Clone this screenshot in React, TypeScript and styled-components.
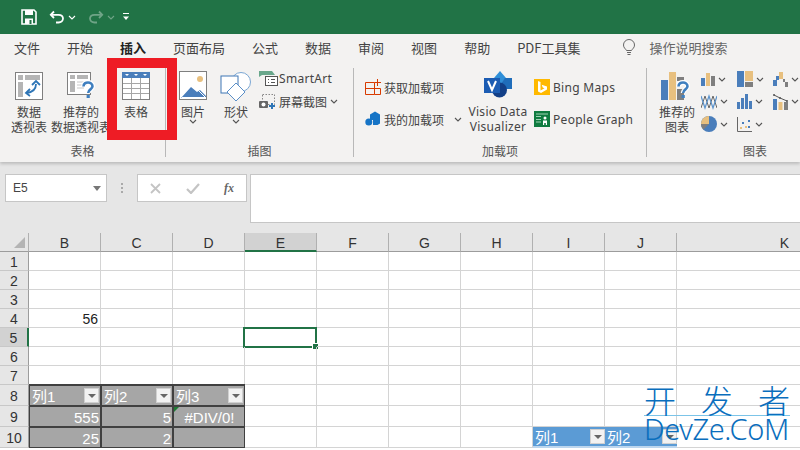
import { ReactNode } from "react";
import styled, { createGlobalStyle } from "styled-components";

const CJK = `"Noto Sans CJK SC", "Noto Sans", sans-serif`;
const LATIN = `"Liberation Sans", "Noto Sans CJK SC", sans-serif`;
const BLUE = "#4a7ebb";
const TAN = "#e8c07f";
const GREY = "#7f7f7f";

const GlobalStyle = createGlobalStyle`
    html, body { margin: 0; padding: 0; background: #e6e6e6; }
    #root { width: 800px; height: 450px; overflow: hidden; }
`;

const Page = styled.div`
    position: relative;
    width: 800px;
    height: 450px;
    overflow: hidden;
    display: flex;
    flex-direction: column;
    font-family: ${CJK};
    color: #444;
`;

const TitleBar = styled.div`
    height: 34px;
    background: #217346;
    display: flex;
    align-items: center;
    padding-left: 21px;
    gap: 6px;
`;

const QuickBtn = styled.span<{ $w: number; $dim?: boolean; $ml?: number }>`
    width: ${(p) => p.$w}px;
    margin-left: ${(p) => p.$ml || 0}px;
    display: flex;
    align-items: center;
    gap: 3px;
    opacity: ${(p) => (p.$dim ? 0.35 : 1)};
`;

const Ribbon = styled.div`
    height: 128px;
    background: #f3f2f1;
    box-shadow: 0 2px 3px rgba(0, 0, 0, 0.18);
    position: relative;
    z-index: 1;
`;

const TabRow = styled.div`
    height: 30px;
    box-sizing: border-box;
    padding: 0 0 3px 14px;
    display: flex;
    align-items: center;
    gap: 27px;
    font-size: 13px;
`;

const Tab = styled.span<{ $active?: boolean }>`
    color: ${(p) => (p.$active ? "#222" : "#444")};
    font-weight: ${(p) => (p.$active ? 700 : 400)};
    white-space: nowrap;
`;

const Search = styled.span`
    margin-left: 14px;
    display: flex;
    align-items: center;
    gap: 14px;
    color: #666;
`;

const Groups = styled.div`
    display: flex;
    padding-top: 4px;
`;

const Group = styled.div<{ $w: number; $last?: boolean }>`
    width: ${(p) => p.$w}px;
    flex: none;
    height: 89px;
    display: flex;
    flex-direction: column;
    border-right: ${(p) => (p.$last ? "none" : "1px solid #b8b8b8")};
    box-sizing: border-box;
`;

const GroupBody = styled.div`
    height: 77px;
    display: flex;
`;

const GroupLabel = styled.div`
    height: 12px;
    line-height: 12px;
    text-align: center;
    font-size: 12px;
    color: #555;
`;

const BigBtn = styled.div<{ $w: number; $ml?: number }>`
    width: ${(p) => p.$w}px;
    margin-left: ${(p) => p.$ml || 0}px;
    flex: none;
    display: flex;
    flex-direction: column;
    align-items: center;
    padding-top: 3px;
    font-size: 12px;
    line-height: 15px;
    white-space: nowrap;
`;

const BigIcon = styled.div`
    height: 29px;
    margin-bottom: 4px;
    display: flex;
    justify-content: center;
`;

const LatinLabel = styled.span`
    font-family: "Noto Sans", sans-serif;
    letter-spacing: 0.3px;
    font-size: 12px;
`;

const Stack = styled.div<{ $w: number; $pl: number; $gap: number; $pt: number }>`
    width: ${(p) => p.$w}px;
    flex: none;
    display: flex;
    flex-direction: column;
    padding: ${(p) => p.$pt}px 0 0 ${(p) => p.$pl}px;
    gap: ${(p) => p.$gap}px;
    box-sizing: border-box;
`;

const SmallBtn = styled.div<{ $gap?: number }>`
    height: 18px;
    display: flex;
    align-items: center;
    gap: ${(p) => p.$gap ?? 3}px;
    font-size: 12px;
    white-space: nowrap;
`;

const ChartGrid = styled.div`
    display: grid;
    grid-template-columns: repeat(3, 36px);
    grid-auto-rows: 22.5px;
    margin-left: 6px;
`;

const ChartBtn = styled.div`
    display: flex;
    align-items: center;
    gap: 3px;
    height: 22px;
`;

const RedBox = styled.div`
    position: absolute;
    left: 107px;
    top: 24px;
    width: 70px;
    height: 82px;
    box-sizing: border-box;
    border: 10px solid #ee1c25;
    z-index: 3;
`;

const FormulaArea = styled.div`
    height: 71px;
    background: #e6e6e6;
    display: flex;
    align-items: flex-start;
    padding: 12px 0 0 5px;
    box-sizing: border-box;
`;

const NameBox = styled.div`
    width: 102px;
    height: 28px;
    box-sizing: border-box;
    background: #fff;
    border: 1px solid #c6c6c6;
    display: flex;
    align-items: center;
    justify-content: space-between;
    padding: 0 5px 0 7px;
    font: 12px ${LATIN};
    color: #444;
`;

const Grip = styled.div`
    width: 2px;
    height: 10px;
    margin: 9px 14px 0 14px;
    border-left: 2px dotted #aaa;
    box-sizing: border-box;
`;

const FxBox = styled.div`
    width: 110px;
    height: 28px;
    box-sizing: border-box;
    background: #fff;
    border: 1px solid #c6c6c6;
    display: flex;
    align-items: center;
    justify-content: space-between;
    padding: 0 12px;
`;

const Fx = styled.span`
    font: italic 700 12px "Liberation Serif", serif;
    color: #666;
`;

const FormulaInput = styled.div`
    flex: 1;
    height: 49px;
    margin-left: 3px;
    background: #fff;
    border: 1px solid #c6c6c6;
    border-right: none;
    box-sizing: border-box;
`;

const Sheet = styled.div`
    flex: 1;
    background: #fff;
    overflow: hidden;
    font-family: ${LATIN};
    font-size: 14px;
    color: #222;
`;

const Row = styled.div<{ $h: number }>`
    display: flex;
    height: ${(p) => p.$h}px;
`;

const Corner = styled.div`
    width: 29px;
    flex: none;
    background: #e6e6e6;
    box-sizing: border-box;
    border-right: 1px solid #b0b0b0;
    border-bottom: 1px solid #9c9c9c;
    display: flex;
    align-items: flex-end;
    justify-content: flex-end;
    padding: 0 3px 3px 0;
`;

const ColHead = styled.div<{ $w: number; $on?: boolean }>`
    width: ${(p) => p.$w}px;
    flex: none;
    box-sizing: border-box;
    background: ${(p) => (p.$on ? "#d2d2d2" : "#e6e6e6")};
    border-right: 1px solid #b0b0b0;
    border-bottom: ${(p) => (p.$on ? "2px solid #217346" : "1px solid #9c9c9c")};
    display: flex;
    align-items: center;
    justify-content: center;
    padding-top: 2px;
    color: #333;
`;

const RowHead = styled.div<{ $on?: boolean }>`
    width: 29px;
    flex: none;
    box-sizing: border-box;
    background: ${(p) => (p.$on ? "#d2d2d2" : "#e6e6e6")};
    border-right: ${(p) => (p.$on ? "2px solid #217346" : "1px solid #9c9c9c")};
    border-bottom: 1px solid #c8c8c8;
    display: flex;
    align-items: center;
    justify-content: center;
    padding-top: 2px;
    color: #333;
`;

const Cell = styled.div<{ $w: number }>`
    position: relative;
    width: ${(p) => p.$w}px;
    flex: none;
    box-sizing: border-box;
    border-right: 1px solid #d4d4d4;
    border-bottom: 1px solid #d4d4d4;
    display: flex;
    align-items: center;
    justify-content: flex-end;
    padding: 2px 2px 0 0;
`;

const TableCell = styled.div<{ $center?: boolean; $head?: boolean }>`
    position: relative;
    width: 72px;
    flex: none;
    box-sizing: border-box;
    background: #a6a6a6;
    border: 1px solid #404040;
    box-shadow: ${(p) => (p.$head ? "0 -1px #404040" : "none")};
    color: #fff;
    font-size: 15px;
    display: flex;
    align-items: center;
    justify-content: ${(p) => (p.$head ? "space-between" : p.$center ? "center" : "flex-end")};
    padding: ${(p) => (p.$head ? "0" : "1px")} 1px 0 2px;
`;

const BlueCell = styled.div`
    width: 72px;
    flex: none;
    box-sizing: border-box;
    background: #5b9bd5;
    border-bottom: 2px solid #bcd6ee;
    color: #fff;
    font-size: 15px;
    display: flex;
    align-items: center;
    justify-content: space-between;
    padding: 0 0 0 2px;
`;

const FilterBtn = styled.span`
    width: 15px;
    height: 15px;
    flex: none;
    background: #f2f2f2;
    border: 1px solid #d0d0d0;
    box-sizing: border-box;
    display: flex;
    align-items: center;
    justify-content: center;
    &::after {
        content: "";
        border-left: 4px solid transparent;
        border-right: 4px solid transparent;
        border-top: 4px solid #666;
    }
`;

const ErrorMark = styled.span`
    position: absolute;
    left: 0;
    top: 0;
    border-top: 5px solid #1e7b34;
    border-right: 5px solid transparent;
`;

const Selection = styled.div`
    position: absolute;
    left: -2px;
    top: -1px;
    width: 74px;
    height: 21px;
    box-sizing: border-box;
    border: 2px solid #217346;
    &::after {
        content: "";
        position: absolute;
        right: -4px;
        bottom: -4px;
        width: 5px;
        height: 5px;
        background: #217346;
        border: 1px solid #fff;
    }
`;

const Watermark = styled.div`
    position: absolute;
    left: 644px;
    top: 383px;
    width: 146px;
    color: #0a6ebd;
    z-index: 2;
`;

const WatermarkCn = styled.div`
    font: 300 32px/32px ${CJK};
    display: flex;
    justify-content: space-between;
    border-bottom: 1px solid #7cc4e8;
    height: 32px;
`;

const WatermarkEn = styled.div`
    font: 300 29px/26px "Noto Sans", sans-serif;
    letter-spacing: -0.4px;
    white-space: nowrap;
`;

function Svg({ w, h, children }: { w: number; h: number; children: ReactNode }) {
    return (
        <svg width={w} height={h} viewBox={`0 0 ${w} ${h}`} style={{ display: "block", flex: "none" }}>
            {children}
        </svg>
    );
}

function Chevron({ color = "#555" }: { color?: string }) {
    return (
        <Svg w={8} h={5}>
            <path d="M1 1l3 3 3-3" fill="none" stroke={color} strokeWidth="1.1" />
        </Svg>
    );
}

function Question({ x, y }: { x: number; y: number }) {
    return (
        <g transform={`translate(${x} ${y})`}>
            <path d="M1.5 5.5C1.5 2.5 3.8 1.5 6 1.5s4.5 1.2 4.5 3.8c0 3.2-4.3 3-4.3 6.7" fill="none" stroke="#fff" strokeWidth="5" />
            <path d="M1.5 5.5C1.5 2.5 3.8 1.5 6 1.5s4.5 1.2 4.5 3.8c0 3.2-4.3 3-4.3 6.7" fill="none" stroke="#3f7fbf" strokeWidth="2.6" />
            <rect x="4.6" y="14" width="3.2" height="3" fill="#3f7fbf" />
        </g>
    );
}

const SaveIcon = () => (
    <Svg w={16} h={16}>
        <path d="M1 1h12l2 2v12H1z" fill="none" stroke="#fff" strokeWidth="1.6" />
        <rect x="4" y="1" width="8" height="5" fill="#fff" />
        <rect x="4" y="9.5" width="8" height="5.5" fill="#fff" />
        <rect x="8.5" y="11" width="2" height="4" fill="#217346" />
    </Svg>
);

const UndoIcon = () => (
    <Svg w={16} h={14}>
        <path d="M5 1.5L1.8 4.8 5 8" fill="none" stroke="#fff" strokeWidth="1.8" />
        <path d="M2 4.8h7.5c3 0 4.5 1.8 4.5 3.8s-1.8 3.9-4.5 3.9H7" fill="none" stroke="#fff" strokeWidth="1.8" />
    </Svg>
);

const RedoIcon = () => (
    <Svg w={16} h={14}>
        <path d="M11 1.5l3.2 3.3L11 8" fill="none" stroke="#fff" strokeWidth="1.8" />
        <path d="M14 4.8H6.500c-3 0-4.500 1.800-4.500 3.800s1.800 3.900 4.500 3.900H9" fill="none" stroke="#fff" strokeWidth="1.8" />
    </Svg>
);

const CustomizeIcon = () => (
    <Svg w={8} h={8}>
        <rect x="1" y="0" width="6" height="1" fill="#fff" />
        <path d="M1 3.500h6L4 7z" fill="#fff" />
    </Svg>
);

const BulbIcon = () => (
    <Svg w={14} h={17}>
        <path d="M4.500 11.500C3.500 9.500 1.500 9 1.500 6a5.500 5.500 0 0 1 11 0c0 3-2 3.500-3 5.500z" fill="none" stroke="#666" />
        <path d="M5 13.500h4M5.500 15.500h3" stroke="#666" />
    </Svg>
);

const PivotIcon = () => (
    <Svg w={28} h={29}>
        <rect x="0.500" y="1.500" width="27" height="27" fill="#fff" stroke={GREY} />
        <rect x="3" y="4" width="5" height="5" fill="#b5b5b5" />
        <rect x="10" y="4" width="15" height="5" fill="#b5b5b5" />
        <rect x="3" y="11" width="5" height="15" fill="#b5b5b5" />
        <path d="M21 13c0 5-3 8-9 9" fill="none" stroke="#2e75b6" strokeWidth="1.800" />
        <path d="M17 14l4-4 4 4M15 18l-4 4 4 3" fill="none" stroke="#2e75b6" strokeWidth="1.800" />
    </Svg>
);

const PivotHelpIcon = () => (
    <Svg w={30} h={29}>
        <rect x="1.500" y="1.500" width="23" height="22" fill="#fff" stroke={GREY} />
        <rect x="4" y="4" width="5" height="4" fill="#b5b5b5" />
        <rect x="11" y="4" width="11" height="4" fill="#b5b5b5" />
        <rect x="4" y="10" width="5" height="11" fill="#b5b5b5" />
        <path d="M11 11h10M11 14h10M11 17h7" stroke="#c8c8c8" />
        <Question x={16} y={10} />
    </Svg>
);

const TableIcon = () => (
    <Svg w={28} h={29}>
        <rect x="0.500" y="1.500" width="27" height="27" fill="#fff" stroke={GREY} />
        <rect x="0" y="1" width="28" height="6" fill="#4a7ebb" />
        <path d="M3 3h4L5 5zM12 3h4l-2 2zM21 3h4l-2 2z" fill="#fff" />
        <path d="M1 12.500h26M1 17.500h26M1 22.500h26M9.500 7v21M18.500 7v21" stroke="#a6a6a6" />
    </Svg>
);

const PictureIcon = () => (
    <Svg w={28} h={29}>
        <rect x="0.500" y="0.500" width="27" height="28" fill="#fff" stroke={GREY} />
        <circle cx="21" cy="8" r="3" fill={TAN} />
        <path d="M2 27l10-11 6 5 3-2 6 6v1H2z" fill="#4a7ebb" />
        <path d="M15 15l12 12" stroke="#fff" />
    </Svg>
);

const ShapeIcon = () => (
    <Svg w={32} h={31}>
        <circle cx="21" cy="11" r="9.500" fill="#fff" stroke="#7ba7d4" />
        <rect x="1" y="5" width="17" height="17" fill="#fff" stroke="#3f77b5" />
        <path d="M16 12l9 9-9 9-9-9z" fill="#fff" stroke="#5b8fc7" />
    </Svg>
);

const SmartArtIcon = () => (
    <Svg w={19} h={17}>
        <path d="M0 1h13l3 4H3l-3 2z" fill="#69a78b" />
        <rect x="6.500" y="6.500" width="12" height="9" fill="#fff" stroke="#555" />
        <path d="M9 9.500h1M12 9.500h4M9 12.500h1M12 12.500h4" stroke="#555" />
    </Svg>
);

const ScreenshotIcon = () => (
    <Svg w={17} h={15}>
        <rect x="3.500" y="0.500" width="12" height="10" fill="none" stroke="#888" strokeDasharray="1.500 1.500" />
        <rect x="0" y="7" width="9" height="7" rx="1" fill="#666" />
        <circle cx="4.500" cy="10.500" r="2" fill="#fff" />
        <path d="M13 9v6M10 12h6" stroke="#2e75b6" strokeWidth="2" />
    </Svg>
);

const GetAddinIcon = () => (
    <Svg w={16} h={16}>
        <path d="M0.500 3.500h9v12h-9zM0.500 9.500h15v6h-6" fill="none" stroke="#d83b01" />
        <path d="M12.500 0v7M9.500 3.500h6.500" stroke="#d83b01" />
    </Svg>
);

const MyAddinIcon = () => (
    <Svg w={16} h={16}>
        <path d="M5 3.500L10 0.500l5 3v9l-2.500 1.500H8V9H5z" fill="#1674c6" />
        <circle cx="3.800" cy="11" r="3.500" fill="#1674c6" />
    </Svg>
);

const VisioIcon = () => (
    <Svg w={28} h={28}>
        <path d="M16 0l6 7-6 7-6-7z" fill="#2f8fd8" />
        <path d="M21 7h7v11h-7l-5-4z" fill="#1f6dba" />
        <circle cx="15.500" cy="19" r="7.500" fill="#123f87" />
        <rect x="0" y="7" width="16" height="15" fill="#1b5cb3" />
        <path d="M4 10l4 9 4-9" fill="none" stroke="#fff" strokeWidth="2" />
    </Svg>
);

const BingIcon = () => (
    <Svg w={16} h={16}>
        <rect width="16" height="16" fill="#ffb900" />
        <path d="M4 2l2.500 1v8.500l4-2.200-1.800-.9-1-2.700 5.300 1.900v3l-6 3.400L4 12.500z" fill="#fff" />
    </Svg>
);

const PeopleIcon = () => (
    <Svg w={16} h={16}>
        <rect width="16" height="16" fill="#107c41" />
        <path d="M2 3h12M2 5.500h5" stroke="#9fd2b4" />
        <circle cx="11" cy="7" r="1.500" fill="#fff" />
        <path d="M9 9.500h4V14h-1.200v-2h-1.600v2H9z" fill="#fff" />
        <path d="M2 8.500h5M2 11h5" stroke="#9fd2b4" />
    </Svg>
);

const RecommendChartIcon = () => (
    <Svg w={32} h={29}>
        <rect x="0" y="9" width="7" height="20" fill={BLUE} />
        <rect x="8" y="1" width="7" height="28" fill={TAN} />
        <rect x="16" y="6" width="7" height="4" fill={GREY} />
        <rect x="16" y="18" width="7" height="11" fill={GREY} />
        <Question x={16} y={10} />
    </Svg>
);

const Bars = () => (
    <Svg w={14} h={14}>
        <rect x="0" y="6" width="4" height="8" fill={BLUE} />
        <rect x="5" y="1" width="4" height="13" fill={TAN} />
        <rect x="10" y="4" width="4" height="10" fill={GREY} />
    </Svg>
);

const Treemap = () => (
    <Svg w={16} h={16}>
        <rect x="0" y="0" width="7" height="16" fill={BLUE} />
        <rect x="8" y="0" width="8" height="10" fill={TAN} />
        <rect x="8" y="11" width="8" height="5" fill={GREY} />
    </Svg>
);

const Waterfall = () => (
    <Svg w={15} h={15}>
        <path d="M0 14V8h3V4h3v4H4v6z" fill={BLUE} />
        <rect x="6" y="0" width="4" height="7" fill={TAN} />
        <path d="M10 7h2v3h3v5h-3v-5h-2z" fill={GREY} />
    </Svg>
);

const LineChart = () => (
    <Svg w={16} h={16}>
        <path d="M0 14L4 2l4 12 4-12 4 12" fill="none" stroke="#666" />
        <path d="M0 2l4 12 4-12 4 12 4-12" fill="none" stroke="#5b93cc" strokeWidth="1.200" />
    </Svg>
);

const Histogram = () => (
    <Svg w={15} h={15}>
        <rect x="0" y="8" width="3" height="7" fill={BLUE} />
        <rect x="4" y="4" width="3" height="11" fill={BLUE} />
        <rect x="8" y="0" width="3" height="15" fill={BLUE} />
        <rect x="12" y="7" width="3" height="8" fill={BLUE} />
    </Svg>
);

const Combo = () => (
    <Svg w={15} h={16}>
        <rect x="0" y="5" width="4" height="11" fill={BLUE} />
        <rect x="5.500" y="8" width="4" height="8" fill={TAN} />
        <rect x="11" y="8" width="4" height="8" fill={GREY} />
        <path d="M1 1l6 3 7 3" fill="none" stroke="#555" />
        <path d="M1 0v2M7 3v2M14 6v2" stroke="#555" strokeWidth="1.500" />
    </Svg>
);

const Pie = () => (
    <Svg w={16} h={16}>
        <circle cx="8" cy="8" r="8" fill={BLUE} />
        <path d="M8 8V0a8 8 0 0 0-8 8z" fill={TAN} />
        <path d="M8 8H0a8 8 0 0 0 2.300 5.700z" fill={GREY} />
    </Svg>
);

const Scatter = () => (
    <Svg w={15} h={15}>
        <path d="M0.500 0v14.500H15" fill="none" stroke="#666" />
        <path d="M3 10h2v2H3zM8 9h2v2H8z" fill={TAN} />
        <path d="M5 5h2v2H5zM11 3h2v2h-2zM11 9h2v2h-2z" fill={BLUE} />
    </Svg>
);

const TABS = ["文件", "开始", "插入", "页面布局", "公式", "数据", "审阅", "视图", "帮助", "PDF工具集"];
const COLS = [
    { id: "B", w: 72 },
    { id: "C", w: 72 },
    { id: "D", w: 72 },
    { id: "E", w: 72 },
    { id: "F", w: 72 },
    { id: "G", w: 72 },
    { id: "H", w: 72 },
    { id: "I", w: 72 },
    { id: "J", w: 72 },
    { id: "K", w: 216 },
];
const CHARTS = [Bars, Treemap, Waterfall, LineChart, Histogram, Combo, Pie, Scatter];

function PlainCells({ from = 0, to, row }: { from?: number; to?: number; row: number }) {
    return (
        <>
            {COLS.slice(from, to).map((c) => (
                <Cell key={c.id} $w={c.w}>
                    {row === 4 && c.id === "B" && "56"}
                    {row === 5 && c.id === "E" && <Selection />}
                </Cell>
            ))}
        </>
    );
}

function Head({ label }: { label: string }) {
    return (
        <TableCell $head>
            {label}
            <FilterBtn />
        </TableCell>
    );
}

export default function App() {
    return (
        <Page>
            <GlobalStyle />
            <TitleBar>
                <QuickBtn $w={16}><SaveIcon /></QuickBtn>
                <QuickBtn $w={27} $ml={6}><UndoIcon /><Chevron color="#fff" /></QuickBtn>
                <QuickBtn $w={27} $dim $ml={6}><RedoIcon /><Chevron color="#fff" /></QuickBtn>
                <QuickBtn $w={8} $ml={1}><CustomizeIcon /></QuickBtn>
            </TitleBar>
            <Ribbon>
                <TabRow>
                    {TABS.map((t) => (
                        <Tab key={t} $active={t === "插入"}>{t}</Tab>
                    ))}
                    <Search>
                        <BulbIcon />
                        操作说明搜索
                    </Search>
                </TabRow>
                <Groups>
                    <Group $w={166}>
                        <GroupBody>
                            <BigBtn $w={58}>
                                <BigIcon><PivotIcon /></BigIcon>
                                <span>数据</span>
                                <span>透视表</span>
                            </BigBtn>
                            <BigBtn $w={46}>
                                <BigIcon><PivotHelpIcon /></BigIcon>
                                <span>推荐的</span>
                                <span>数据透视表</span>
                            </BigBtn>
                            <BigBtn $w={64}>
                                <BigIcon><TableIcon /></BigIcon>
                                <span>表格</span>
                            </BigBtn>
                        </GroupBody>
                        <GroupLabel>表格</GroupLabel>
                    </Group>
                    <Group $w={188}>
                        <GroupBody>
                            <BigBtn $w={54}>
                                <BigIcon><PictureIcon /></BigIcon>
                                <span>图片</span>
                                <Chevron />
                            </BigBtn>
                            <BigBtn $w={32}>
                                <BigIcon><ShapeIcon /></BigIcon>
                                <span>形状</span>
                                <Chevron />
                            </BigBtn>
                            <Stack $w={100} $pl={7} $gap={5} $pt={1}>
                                <SmallBtn $gap={1}><SmartArtIcon /><LatinLabel>SmartArt</LatinLabel></SmallBtn>
                                <SmallBtn><ScreenshotIcon />屏幕截图<Chevron /></SmallBtn>
                            </Stack>
                        </GroupBody>
                        <GroupLabel>插图</GroupLabel>
                    </Group>
                    <Group $w={293}>
                        <GroupBody>
                            <Stack $w={113} $pl={11} $gap={14} $pt={10}>
                                <SmallBtn><GetAddinIcon />获取加载项</SmallBtn>
                                <SmallBtn><MyAddinIcon />我的加载项<span style={{ width: 4 }} /><Chevron /></SmallBtn>
                            </Stack>
                            <BigBtn $w={62}>
                                <BigIcon><VisioIcon /></BigIcon>
                                <LatinLabel>Visio Data</LatinLabel>
                                <LatinLabel>Visualizer</LatinLabel>
                            </BigBtn>
                            <Stack $w={110} $pl={5} $gap={14} $pt={10}>
                                <SmallBtn><BingIcon /><LatinLabel>Bing Maps</LatinLabel></SmallBtn>
                                <SmallBtn><PeopleIcon /><LatinLabel>People Graph</LatinLabel></SmallBtn>
                            </Stack>
                        </GroupBody>
                        <GroupLabel>加载项</GroupLabel>
                    </Group>
                    <Group $w={216} $last>
                        <GroupBody>
                            <BigBtn $w={36} $ml={12}>
                                <BigIcon><RecommendChartIcon /></BigIcon>
                                <span>推荐的</span>
                                <span>图表</span>
                            </BigBtn>
                            <ChartGrid>
                                {CHARTS.map((C, i) => (
                                    <ChartBtn key={i}><C /><Chevron /></ChartBtn>
                                ))}
                            </ChartGrid>
                        </GroupBody>
                        <GroupLabel>图表</GroupLabel>
                    </Group>
                </Groups>
                <RedBox />
            </Ribbon>
            <FormulaArea>
                <NameBox>
                    E5
                    <Svg w={8} h={5}><path d="M0 0h8L4 5z" fill="#777" /></Svg>
                </NameBox>
                <Grip />
                <FxBox>
                    <Svg w={11} h={11}><path d="M1 1l9 9M10 1l-9 9" stroke="#c4c4c4" strokeWidth="1.800" /></Svg>
                    <Svg w={14} h={11}><path d="M1 6l4 4 8-9" fill="none" stroke="#c4c4c4" strokeWidth="2.200" /></Svg>
                    <Fx>fx</Fx>
                </FxBox>
                <FormulaInput />
            </FormulaArea>
            <Sheet>
                <Row $h={19}>
                    <Corner>
                        <Svg w={11} h={11}><path d="M11 0v11H0z" fill="#b4b4b4" /></Svg>
                    </Corner>
                    {COLS.map((c) => (
                        <ColHead key={c.id} $w={c.w} $on={c.id === "E"}>{c.id}</ColHead>
                    ))}
                </Row>
                {[1, 2, 3, 4, 5, 6, 7].map((r) => (
                    <Row key={r} $h={19}>
                        <RowHead $on={r === 5}>{r}</RowHead>
                        <PlainCells row={r} />
                    </Row>
                ))}
                <Row $h={21}>
                    <RowHead>8</RowHead>
                    <Head label="列1" />
                    <Head label="列2" />
                    <Head label="列3" />
                    <PlainCells from={3} row={8} />
                </Row>
                <Row $h={21}>
                    <RowHead>9</RowHead>
                    <TableCell>555</TableCell>
                    <TableCell>5</TableCell>
                    <TableCell $center><ErrorMark />#DIV/0!</TableCell>
                    <PlainCells from={3} row={9} />
                </Row>
                <Row $h={21}>
                    <RowHead>10</RowHead>
                    <TableCell>25</TableCell>
                    <TableCell>2</TableCell>
                    <TableCell />
                    <PlainCells from={3} to={7} row={10} />
                    <BlueCell>列1<FilterBtn /></BlueCell>
                    <BlueCell>列2<FilterBtn /></BlueCell>
                    <PlainCells from={9} row={10} />
                </Row>
            </Sheet>
            <Watermark>
                <WatermarkCn><span>开</span><span>发</span><span>者</span></WatermarkCn>
                <WatermarkEn>DevZe.CoM</WatermarkEn>
            </Watermark>
        </Page>
    );
}
